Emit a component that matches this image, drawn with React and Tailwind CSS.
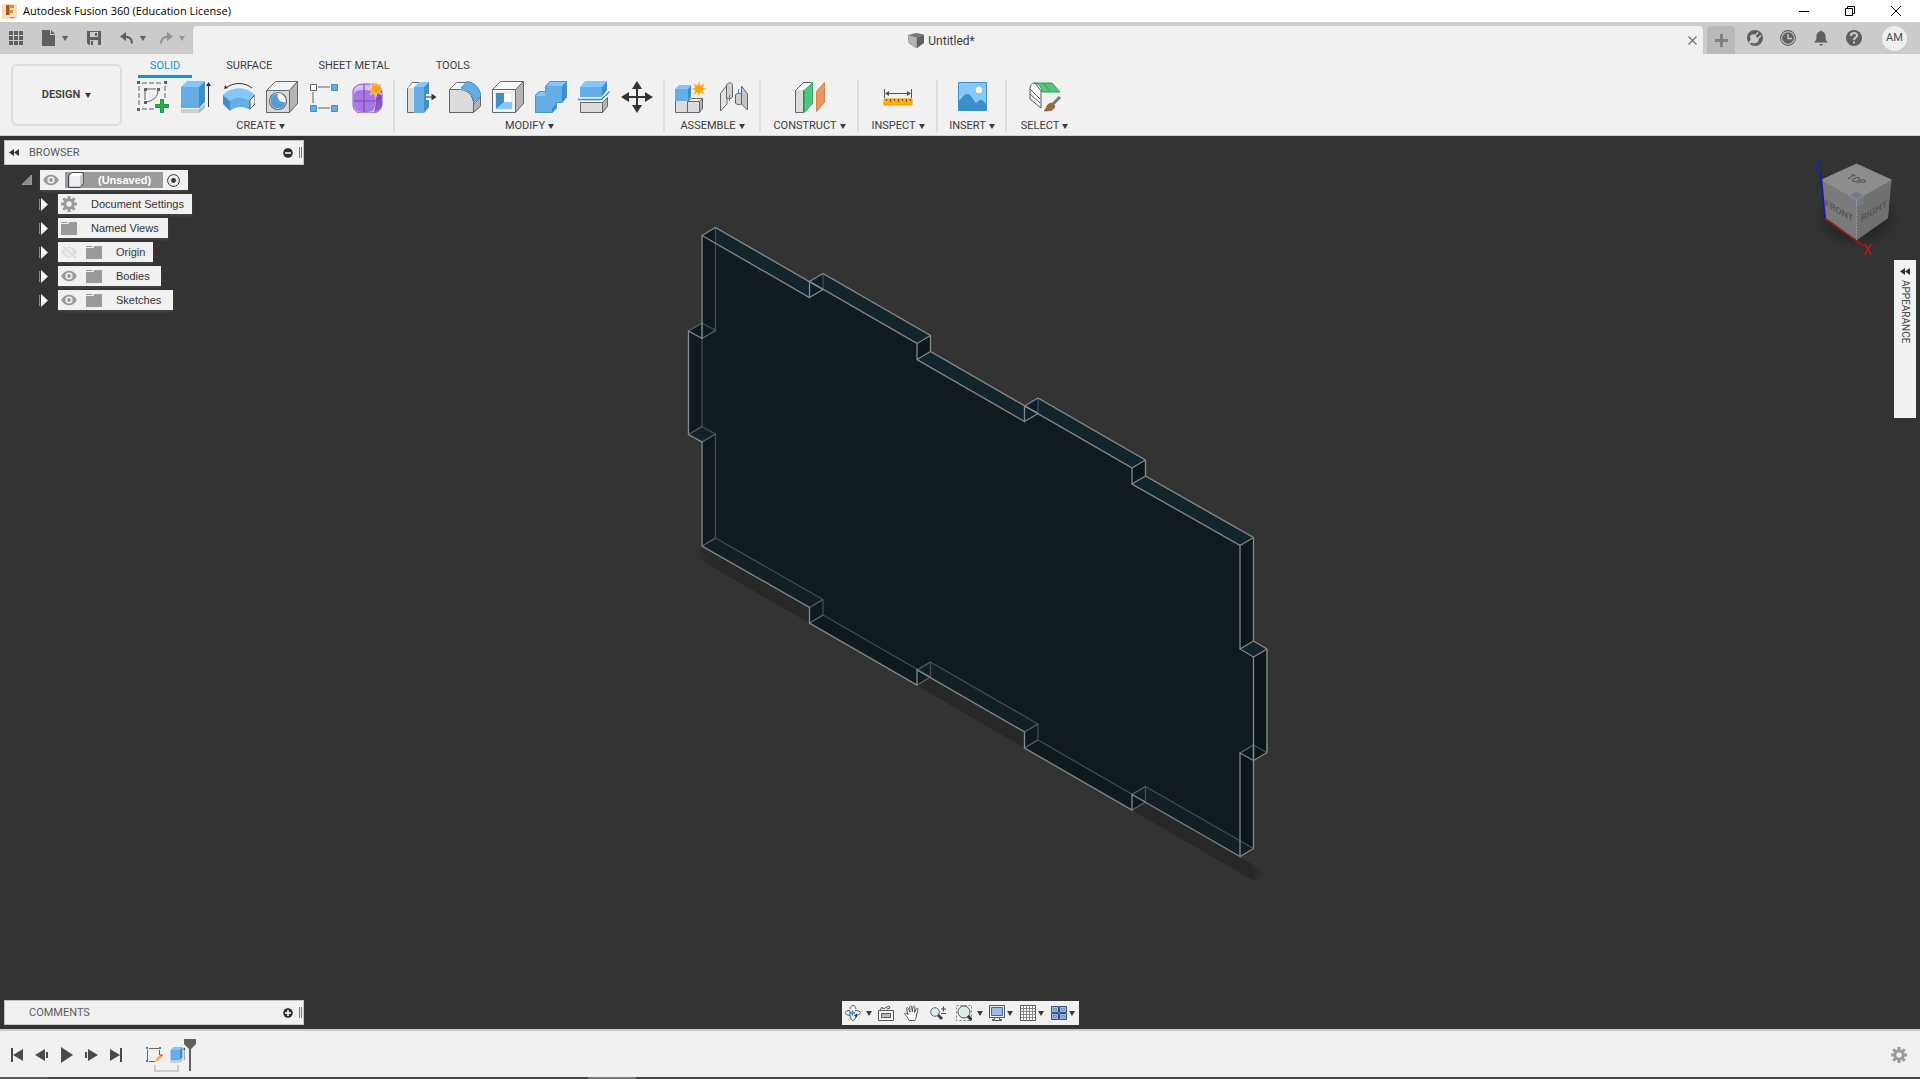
import React, { useState } from 'react';

const Icon = ({ size = 'w-8 h-8', box = '0 0 32 32', children }) => (
  <svg className={`${size} shrink-0 block`} viewBox={box} fill="none" aria-hidden="true">
    {children}
  </svg>
);

const Caret = ({ className = 'text-[#3c3c3c]' }) => (
  <svg className={`w-[6px] h-[5px] shrink-0 ${className}`} viewBox="0 0 6 5" aria-hidden="true">
    <path d="M0 0h6L3 5z" fill="currentColor" />
  </svg>
);

const STAR = 'M24 0l1.5 4.5L30 2l-2.300 4.500L32 8l-4.300 1.500L30 14l-4.500-2.500L24 16l-1.500-4.500L18 14l2.300-4.500L16 8l4.300-1.500L18 2l4.500 2.500z';

// Ribbon icons

const SketchIcon = () => (
  <Icon>
    <path d="M5 2h20M2 5v20M28 5v14M5 28h13" stroke="#606060" strokeDasharray="5 2" />
    <path d="M10 8h9M8 10v9M21 9c0 7-5 11-12 12" stroke="#606060" />
    <path d="M0 0h3v3H0zM27 0h3v3h-3zM0 27h3v3H0zM7 7h3v3H7zM20 7h3v3h-3zM7 20h3v3H7z" fill="#606060" />
    <path d="M23.500 18.500h3v5h5v3h-5v5h-3v-5h-5v-3h5z" fill="#22b14c" stroke="#159a3c" />
  </Icon>
);

const ExtrudeIcon = ({ size }) => (
  <Icon size={size}>
    <path d="M1 28h18l6-5v4l-6 5H1z" fill="#b9b9b9" />
    <path d="M1 28h18v4H1z" fill="#cfcfcf" />
    <path d="M1 6l6-6h18l-6 6z" fill="#84c7fb" />
    <path d="M1 6h18v21H1z" fill="#65ade5" />
    <path d="M19 6l6-6v21l-6 6z" fill="#3d8fcb" />
    <path d="M28.500 4v22" stroke="#333" />
    <path d="M28.500 1l2.500 4h-5z" fill="#333" />
  </Icon>
);

const RevolveIcon = () => (
  <Icon>
    <path d="M3 7C10 1 22 1 29 7" stroke="#333" />
    <path d="M1 8l1-4 3 3z" fill="#333" />
    <path d="M0 14C8 5 24 5 32 14l-5 6c-6-5-14-5-20 0z" fill="#84c7fb" />
    <path d="M0 14l7 6v10l-7-7z" fill="#3d8fcb" />
    <path d="M7 20c6-5 13-5 20 0v9c-6-4-14-4-20 1z" fill="#65ade5" />
    <path d="M27 19l5-5v9l-5 5z" fill="#f5f5f5" stroke="#555" />
  </Icon>
);

const HoleIcon = () => (
  <Icon>
    <path d="M.5 9.500l9-9h22l-8 9z" fill="#f4f4f4" stroke="#666" />
    <path d="M23.500 9.500l8-9v22l-8 9z" fill="#b4b4b4" stroke="#666" />
    <path d="M.5 9.500h23v22H.5z" fill="#dadada" stroke="#666" />
    <circle cx="12" cy="20" r="8.500" fill="#fff" stroke="#666" strokeWidth="1.200" />
    <path d="M12 12.500a7.500 7.500 0 1 0 7.500 8.500c-5 1-9-3-7.500-8.500z" fill="#4f9edb" />
  </Icon>
);

const PatternIcon = () => (
  <Icon>
    <path d="M9 6h12M4 11v11M9 27h12" stroke="#606060" />
    <path d="M1.500 3.500h6v6h-6z" fill="#fff" stroke="#606060" />
    <path d="M22.500 3.500h6v6h-6zM1.500 24.500h6v6h-6zM22.500 24.500h6v6h-6z" fill="#65ade5" stroke="#3d8fcb" />
  </Icon>
);

const FormIcon = () => (
  <Icon>
    <path d="M1 11c0-6 5-8 12-8h8c7 0 9 4 9 10v9c0 7-4 10-11 10h-9C4 32 1 29 1 23z" fill="#d9bdf8" />
    <path d="M2 14c0-4 4-5 9-5h4c6 0 8 3 8 8v6c0 6-3 8-9 8h-3c-6 0-9-3-9-8z" fill="#a878e0" />
    <path d="M23 11l7-4v15c0 4-3 8-8 9 2-4 2-15 1-20z" fill="#8655c4" />
    <path d="M12 3v28M2 20h21l7-4" stroke="#7442b4" />
    <path d="M1 11c0-6 5-8 12-8h8c7 0 9 4 9 10v9c0 7-4 10-11 10h-9C4 32 1 29 1 23z" stroke="#8655c4" />
    <path d={STAR} fill="#fba504" stroke="#f1f1f1" strokeWidth=".5" />
  </Icon>
);

const PressPullIcon = () => (
  <Icon>
    <path d="M1.500 7.500l5-6h10v30H1.500z" fill="#dcdcdc" stroke="#666" />
    <path d="M2 7l5-5h6L8 7z" fill="#fff" />
    <path d="M8 6l5-5h10l-5 5z" fill="#84c7fb" />
    <path d="M8 6h10v26H8z" fill="#65ade5" />
    <path d="M18 6l5-5v25l-5 6z" fill="#3d8fcb" />
    <path d="M20 13h9v6h-9z" fill="#f1f1f1" />
    <path d="M20 16h7" stroke="#333" />
    <path d="M25.500 12.500l5 3.500-5 3.500z" fill="#333" />
  </Icon>
);

const FilletIcon = () => (
  <Icon>
    <path d="M.5 8.500l7-7h12C27 3 31 9 31.500 16v9l-7 6.500H.5z" fill="#f4f4f4" stroke="#666" />
    <path d="M24 24l7.500-8v9l-7 6.500z" fill="#b4b4b4" stroke="#666" />
    <path d="M.5 8.500h11c8 1 12 6 13 13v10H.5z" fill="#dcdcdc" stroke="#666" />
    <path d="M12 7l6-6.500c8 1 13 7 14 14.500l-7 6C24 13 19 8 12 7z" fill="#65ade5" stroke="#3d8fcb" />
  </Icon>
);

const ShellIcon = () => (
  <Icon>
    <path d="M.5 8.500l8-8h23l-8 8z" fill="#f8f8f8" stroke="#666" />
    <path d="M23.500 8.500l8-8v22l-8 9z" fill="#b4b4b4" stroke="#666" />
    <path d="M.5 8.500h23v23H.5z" fill="#f4f4f4" stroke="#666" />
    <path d="M4 12h16v16H4z" fill="#fff" stroke="#dcdcdc" />
    <path d="M4 12h8v10l-8 6z" fill="#3d8fcb" />
    <path d="M4 28l8-7h8v7z" fill="#84c7fb" />
  </Icon>
);

const CombineIcon = () => (
  <Icon>
    <path d="M0 14l4-4h6V6l5-6h17v16l-5 6h-5v5l-5 5H0z" fill="#65ade5" />
    <path d="M10 5l5-5h17l-5 5zM0 15l4-5h6v5z" fill="#84c7fb" />
    <path d="M27 5l5-5v16l-5 6zM17 27l5-5v5l-5 5z" fill="#3d8fcb" />
    <path d="M.5 31.500v-17l4-4h6v-5l5-5h16v16l-5 5h-5v5l-5 5z" stroke="#4696d2" />
  </Icon>
);

const SplitIcon = () => (
  <Icon>
    <path d="M2 6l5-6h22l-5 6z" fill="#84c7fb" />
    <path d="M2 6h22v10H2z" fill="#65ade5" />
    <path d="M24 6l5-6v9l-5 7z" fill="#3d8fcb" />
    <path d="M2.500 21.500h22v10h-22z" fill="#dcdcdc" stroke="#666" />
    <path d="M24.500 21.500l5-5v9l-5 6z" fill="#b4b4b4" stroke="#666" />
    <path d="M0 18.500h23.500l8-8" stroke="#f1f1f1" strokeWidth="4" />
    <path d="M0 18.500h23.500l8-8" stroke="#2f8fd8" strokeWidth="1.300" />
  </Icon>
);

const MoveIcon = () => (
  <Icon>
    <path d="M16 5v22M5 16h22" stroke="#333" strokeWidth="2" />
    <path d="M16 0l5 8H11zM16 32l5-8H11zM0 16l8-5v10zM32 16l-8-5v10z" fill="#333" />
  </Icon>
);

const NewComponentIcon = () => (
  <Icon>
    <path d="M.5 19.500h12v12H.5z" fill="#dcdcdc" stroke="#666" />
    <path d="M12.500 20.500l4-3h11l-3 3z" fill="#f8f8f8" stroke="#666" />
    <path d="M12.500 20.500h12v11h-12z" fill="#dcdcdc" stroke="#666" />
    <path d="M24.500 20.500l3-3v10l-3 4z" fill="#b4b4b4" stroke="#666" />
    <path d="M0 8l4-4h12l-3 4z" fill="#84c7fb" />
    <path d="M0 8h13v12H0z" fill="#65ade5" />
    <path d="M13 8l3-4v12l-3 4z" fill="#3d8fcb" />
    <path d={STAR} fill="#fba504" stroke="#f1f1f1" strokeWidth=".5" />
  </Icon>
);

const JointIcon = () => (
  <Icon>
    <path d="M2.500 12.500L9 4v19l-6.500 7z" fill="#e2e2e2" stroke="#666" strokeLinejoin="round" />
    <path d="M8.500 5c0-4 6-4 6-1v12c-1 2-4 2-6 1z" fill="#cfcfcf" stroke="#666" />
    <path d="M11.500 14v6M20.500 8v6" stroke="#2f8fd8" />
    <path d="M23.500 5l6 8v16l-6-6z" fill="#c4c4c4" stroke="#666" strokeLinejoin="round" />
    <path d="M17.500 14c1-2 4-2 6-1v10c-2 1-5 1-6-1z" fill="#cfcfcf" stroke="#666" />
  </Icon>
);

const PlaneIcon = () => (
  <Icon>
    <path d="M1.500 9.500l8-8h7l-7 8v22h-8z" fill="#dcdcdc" stroke="#666" />
    <path d="M2 9l8-7h8l-8 7z" fill="#fff" />
    <path d="M1.500 9.500l8-8h8" stroke="#555" />
    <path d="M10.500 9.500l8-8v21l-8 9z" fill="#55c57c" stroke="#37ad62" />
    <path d="M22.500 10.500l8-9v20l-8 9z" fill="#e8975e" stroke="#d8824a" />
  </Icon>
);

const MeasureIcon = () => (
  <Icon>
    <path d="M2.500 8v9M29.500 8v9M5 12.500h22" stroke="#555" />
    <path d="M3 12.500l4-2.500v5zM29 12.500L25 10v5z" fill="#555" />
    <path d="M2 18h28v6H2z" fill="#fdb012" stroke="#f09a00" />
    <path d="M4.500 18v2M8.500 18v3M12.500 18v2M16.500 18v3M20.500 18v2M24.500 18v3M28.500 18v2" stroke="#7a5500" />
  </Icon>
);

const InsertIcon = () => (
  <Icon>
    <path d="M2.500 1.500h28v28h-28z" fill="#84c7fb" stroke="#3d8fcb" />
    <path d="M3 20c3-3 5-7 8-7 4 0 6 6 9 9 2-2 3-3 5-3s3 2 5 4v6H3z" fill="#3d8fcb" />
    <circle cx="23" cy="9" r="3.200" fill="#fdf8c4" />
  </Icon>
);

const SelectIcon = () => (
  <Icon>
    <path d="M1 8c0-5 3-6 5-6l6 8v17L1 18z" fill="#fff" stroke="#555" strokeLinejoin="round" />
    <path d="M1 8l10 10M1 13l10 9" stroke="#555" />
    <path d="M5 2h18l8 9H13C13 6 9 2 5 2z" fill="#55c57c" stroke="#2f9f57" />
    <path d="M14 2l8 9" stroke="#2f9f57" />
    <path d="M31 16l-7 7" stroke="#777" strokeWidth="3" />
    <path d="M15 30c3-2 2-8 8-8l3 3c-1 5-6 5-11 5z" fill="#9b6a35" stroke="#7a5024" strokeWidth=".5" />
  </Icon>
);

const GROUPS = [
  { name: 'CREATE', width: 'w-[268px]', icons: [SketchIcon, ExtrudeIcon, RevolveIcon, HoleIcon, PatternIcon, FormIcon] },
  { name: 'MODIFY', width: 'w-[270px]', icons: [PressPullIcon, FilletIcon, ShellIcon, CombineIcon, SplitIcon, MoveIcon] },
  { name: 'ASSEMBLE', width: 'w-24', icons: [NewComponentIcon, JointIcon] },
  { name: 'CONSTRUCT', width: 'w-[98px]', icons: [PlaneIcon] },
  { name: 'INSPECT', width: 'w-[79px]', icons: [MeasureIcon] },
  { name: 'INSERT', width: 'w-[69px]', icons: [InsertIcon] },
  { name: 'SELECT', width: 'w-[74px]', icons: [SelectIcon], last: true },
];

const TitleBar = () => (
  <header className="h-[22px] flex items-center bg-white text-black">
    <svg className="w-[15px] h-[15px] ml-[2px]" viewBox="0 0 15 15" aria-hidden="true">
      <path d="M0 0h15v15H0z" fill="#fbdcc0" />
      <path d="M5 1h7v3H8v2h3v3H8v2H5z" fill="#e08a3c" />
      <path d="M4 1h3v10H4z" fill="#a85a1c" />
      <path d="M8 13h5v1H8z" fill="#e08a3c" />
    </svg>
    <h1 className="ml-[6px] text-[11px] leading-[18px] font-['Open_Sans',sans-serif]">Autodesk Fusion 360 (Education License)</h1>
    <div className="ml-auto flex mr-px">
      <button className="w-[46px] h-[18px] grid place-items-center" aria-label="Minimize">
        <svg className="w-[10px] h-[10px]" viewBox="0 0 10 10"><path d="M0 5.500h10" stroke="#000" /></svg>
      </button>
      <button className="w-[46px] h-[18px] grid place-items-center" aria-label="Restore">
        <svg className="w-[10px] h-[10px]" viewBox="0 0 10 10" fill="none">
          <path d="M.5 2.500h7v7h-7zM2.500 2V.5h7v7H8" stroke="#000" />
        </svg>
      </button>
      <button className="w-[46px] h-[18px] grid place-items-center" aria-label="Close window">
        <svg className="w-[10px] h-[10px]" viewBox="0 0 10 10"><path d="M0 0l10 10M10 0L0 10" stroke="#000" /></svg>
      </button>
    </div>
  </header>
);

const TabBar = () => (
  <div className="h-8 flex items-end bg-[#cbcbcb] text-[#5f5f5f]">
    <div className="w-[193px] h-8 flex items-center pl-[9px] shrink-0">
      <button aria-label="Show data panel">
        <Icon size="w-[14px] h-[14px]" box="0 0 14 14">
          <path d="M0 0h4v4H0zM5 0h4v4H5zM10 0h4v4h-4zM0 5h4v4H0zM5 5h4v4H5zM10 5h4v4h-4zM0 10h4v4H0zM5 10h4v4H5zM10 10h4v4h-4z" fill="currentColor" />
        </Icon>
      </button>
      <button className="ml-[19px] flex items-center gap-[7px]" aria-label="File">
        <Icon size="w-[13px] h-4" box="0 0 13 16">
          <path d="M0 0h8v5h5v11H0zM9 0l4 4H9z" fill="currentColor" />
        </Icon>
        <Caret className="text-[#5f5f5f]" />
      </button>
      <button className="ml-[19px]" aria-label="Save">
        <Icon size="w-[14px] h-[14px]" box="0 0 14 14">
          <path d="M0 0h14v14H2l-2-2z" fill="currentColor" />
          <path d="M3 1h8v5H3zM3 9h8v5H3z" fill="#cbcbcb" />
          <path d="M8 2h2v3H8zM4 10h2v4H4z" fill="currentColor" />
        </Icon>
      </button>
      <button className="ml-[19px] flex items-center gap-[7px]" aria-label="Undo">
        <Icon size="w-[13px] h-3" box="0 0 13 12">
          <path d="M0 4.500L6 0v9z" fill="currentColor" />
          <path d="M4 4.500c5 0 8 2 8 7" stroke="currentColor" strokeWidth="2" />
        </Icon>
        <Caret className="text-[#5f5f5f]" />
      </button>
      <button className="ml-[14px] flex items-center gap-[6px]" aria-label="Redo">
        <Icon size="w-[13px] h-3" box="0 0 13 12">
          <path d="M13 4.500L7 0v9z" fill="#949494" />
          <path d="M9 4.500c-5 0-8 2-8 7" stroke="#949494" strokeWidth="2" />
        </Icon>
        <Caret className="text-[#949494]" />
      </button>
    </div>
    <div className="flex-1 h-7 bg-[#f1f1f1] rounded-t flex items-center">
      <div className="flex-1 flex items-center justify-center gap-1 pl-[2px] pt-px">
        <Icon size="w-4 h-[15px]" box="0 0 16 15">
          <path d="M0 2l8-2 8 1.500-7 3z" fill="#777" />
          <path d="M0 2l9 2.500V15L1 10z" fill="#b5b5b5" stroke="#777" strokeWidth=".6" />
          <path d="M9 4.500l7-3V10l-7 5z" fill="#606060" />
        </Icon>
        <span className="text-[12px] leading-4 text-[#3c3c3c]">Untitled*</span>
      </div>
      <button className="mr-[6px]" aria-label="Close tab">
        <Icon size="w-[9px] h-[9px]" box="0 0 9 9">
          <path d="M.5 .5l8 8M8.500 .5l-8 8" stroke="#777" strokeWidth="1.400" />
        </Icon>
      </button>
    </div>
    <button className="ml-1 w-7 h-7 bg-[#b9b9b9] rounded-t grid place-items-center" aria-label="New design">
      <Icon size="w-[13px] h-[13px]" box="0 0 13 13"><path d="M5 0h3v5h5v3H8v5H5V8H0V5h5z" fill="#808080" /></Icon>
    </button>
    <div className="h-8 flex items-center gap-[17px] pl-3 pr-[13px]">
      <button aria-label="Extensions">
        <Icon size="w-4 h-4" box="0 0 16 16">
          <circle cx="8" cy="8" r="8" fill="currentColor" />
          <path d="M3 5.500L7 4l5 5.500-1.500 3-3.500 1-2.500-1L3 14l-1.500-2 2-2z" fill="#cbcbcb" />
          <path d="M8 5.500l3-3M11 8.500l3-3" stroke="#cbcbcb" strokeWidth="1.600" />
        </Icon>
      </button>
      <button aria-label="Job status">
        <Icon size="w-4 h-4" box="0 0 16 16">
          <circle cx="8" cy="8" r="7.400" stroke="currentColor" strokeWidth="1.100" />
          <circle cx="8" cy="8" r="5.800" fill="currentColor" />
          <path d="M8 4v4.500h4" stroke="#cbcbcb" strokeWidth="1.300" />
        </Icon>
      </button>
      <button aria-label="Notifications">
        <Icon size="w-4 h-4" box="0 0 16 16">
          <path d="M8 0l1 1.500c3 .8 3.500 3 3.500 5 0 3 .5 4.500 2.500 6H1c2-1.500 2.500-3 2.500-6 0-2 .5-4.200 3.500-5zM6 14h4l-2 2z" fill="currentColor" />
        </Icon>
      </button>
      <button aria-label="Help">
        <Icon size="w-4 h-4" box="0 0 16 16">
          <circle cx="8" cy="8" r="8" fill="currentColor" />
          <path d="M5 6c0-4 6-4 6-.5C11 7.500 8 7.500 8 10" stroke="#cbcbcb" strokeWidth="2" />
          <path d="M7 11.500h2v2H7z" fill="#cbcbcb" />
        </Icon>
      </button>
      <button className="ml-[3px] w-[25px] h-[25px] rounded-full bg-[#efefef] text-[11px] text-[#4a4a4a]">AM</button>
    </div>
  </div>
);

const Ribbon = () => {
  const [active, setActive] = useState('SOLID');

  return (
    <div className="h-[82px] flex bg-[#f1f1f1] border-b border-[#d4d4d4] text-[#3c3c3c] text-[11px]">
      <button className="ml-[11px] mt-[10px] w-[111px] h-[62px] pt-px shrink-0 border-2 border-[#dedede] rounded-md flex items-center justify-center gap-[5px] font-semibold">
        DESIGN <Caret />
      </button>
      <div className="ml-[5px] flex flex-col">
        <nav className="h-6 flex gap-[22px] pl-[11px]">
          {['SOLID', 'SURFACE', 'SHEET METAL', 'TOOLS'].map(tab => (
            <button
              key={tab}
              onClick={() => setActive(tab)}
              className={
                tab === active
                  ? 'px-3 h-6 leading-[23px] border-b-[3px] border-[#0d96dc] text-[#0d96dc]'
                  : 'px-3 h-6 leading-[23px] border-b-[3px] border-transparent'
              }
            >
              {tab}
            </button>
          ))}
        </nav>
        <div className="flex pt-[2px]">
          {GROUPS.map(group => (
            <section
              key={group.name}
              className={`${group.width} h-[52px] pl-px flex flex-col items-center ${group.last ? '' : 'border-r-2 border-[#dedede]'}`}
            >
              <div className="flex gap-[11px] pt-px">
                {group.icons.map((Tool, i) => (
                  <button key={i} aria-label={`${group.name} tool ${i + 1}`}><Tool /></button>
                ))}
              </div>
              <button className="mt-[6px] flex items-center gap-[3px] leading-[14px]">
                {group.name} <Caret />
              </button>
            </section>
          ))}
        </div>
      </div>
    </div>
  );
};

const Eye = ({ hidden }) => (
  <Icon size="w-4 h-4" box="0 0 16 16">
    <path d="M0 8c4-7 12-7 16 0-4 7-12 7-16 0z" fill={hidden ? '#dedede' : '#9a9a9a'} />
    <circle cx="8" cy="8" r="3.600" fill="#f1f1f1" />
    <circle cx="8" cy="8" r="1.900" fill={hidden ? '#dedede' : '#9a9a9a'} />
    {hidden && <path d="M2 2l13 12" stroke="#f1f1f1" strokeWidth="3" />}
    {hidden && <path d="M2 2l13 12" stroke="#d0d0d0" strokeWidth="1.200" />}
  </Icon>
);

const Folder = () => (
  <Icon size="w-4 h-[14px]" box="0 0 16 14">
    <path d="M0 1h6l1 1H0zM0 3h7l2-2h7v13H0z" fill="#9a9a9a" />
  </Icon>
);

const Gear = ({ size = 'w-4 h-4' }) => (
  <Icon size={size} box="0 0 16 16">
    <circle cx="8" cy="8" r="4.200" stroke="#9a9a9a" strokeWidth="3" />
    <path d="M8 0v3M8 13v3M0 8h3M13 8h3M2.300 2.300l2.200 2.200M11.500 11.500l2.200 2.200M2.300 13.700l2.200-2.200M11.500 4.500l2.200-2.200" stroke="#9a9a9a" strokeWidth="3" />
  </Icon>
);

const NODES = [
  { label: 'Document Settings', icon: Gear, width: 'w-[134px]' },
  { label: 'Named Views', icon: Folder, width: 'w-[110px]' },
  { label: 'Origin', icon: Folder, eye: 'off', width: 'w-[95px]' },
  { label: 'Bodies', icon: Folder, eye: 'on', width: 'w-[103px]' },
  { label: 'Sketches', icon: Folder, eye: 'on', width: 'w-[115px]' },
];

const PanelHeader = ({ title, open }) => (
  <div className="w-[300px] h-[25px] flex items-center bg-[#f1f1f1] border border-[#c4c4c4]">
    <button className="w-6 pl-1 h-4 flex items-center" aria-label={`Collapse ${title}`}>
      {open && (
        <Icon size="w-[10px] h-[7px]" box="0 0 10 7"><path d="M5 0v7L0 3.500zM10 0v7L5 3.500z" fill="#333" /></Icon>
      )}
    </button>
    <h2 className="pt-[2px] text-[11px] text-[#5a5a5a]">{title}</h2>
    <button className="ml-auto" aria-label={open ? `Hide ${title}` : `Show ${title}`}>
      <Icon size="w-[10px] h-[10px]" box="0 0 10 10">
        <circle cx="5" cy="5" r="4.800" fill="#2e2e2e" />
        <path d={open ? 'M2 5h6' : 'M2 5h6M5 2v6'} stroke="#fff" strokeWidth="1.500" />
      </Icon>
    </button>
    <div className="ml-[6px] mr-px w-[3px] h-[11px] border-l border-r border-[#777]" />
  </div>
);

const Browser = () => (
  <aside className="text-[11px] text-[#333] font-['Liberation_Sans',Arial,sans-serif]">
    <div className="font-[Roboto,sans-serif]"><PanelHeader title="BROWSER" open /></div>
    <div className="mt-[5px] flex items-center pl-[18px] h-5">
      <Icon size="w-[10px] h-[10px]" box="0 0 11 11">
        <path d="M10.500 0v10.500H0z" fill="#8a8a8a" stroke="#ccc" strokeWidth=".6" />
      </Icon>
      <div className="ml-2 h-5 w-[148px] bg-[#f1f1f1] flex items-center pl-[3px] shadow-[0_2px_2px_#444]">
        <Eye />
        <div className="ml-[6px] w-[98px] h-4 bg-[#9a9a9a] flex items-center pl-[3px] text-white font-bold">
          <Icon size="w-4 h-4" box="0 0 16 16">
            <path d="M.7 4l3-3.300h11.500v11l-3 3.600H.7z" fill="#eceef4" stroke="#333" strokeLinejoin="round" />
            <path d="M12 4l3-3v10.500l-3 3.500z" fill="#c4c7cf" />
            <path d="M1.200 4l3-2.800h10.300L12 4z" fill="#fff" />
          </Icon>
          <span className="ml-[14px] whitespace-nowrap">(Unsaved)</span>
        </div>
        <Icon size="w-[13px] h-[13px] ml-1" box="0 0 13 13">
          <circle cx="6.500" cy="6.500" r="5.900" stroke="#333" />
          <circle cx="6.500" cy="6.500" r="2.400" fill="#333" />
        </Icon>
      </div>
    </div>
    <ul className="mt-1 flex flex-col gap-1">
      {NODES.map(node => (
        <li key={node.label} className="h-5 flex items-center pl-[35px]">
          <button aria-label={`Expand ${node.label}`}>
            <Icon size="w-[10px] h-[13px]" box="0 0 10 13">
              <path d="M.5 1v11" stroke="#888" />
              <path d="M2 0l7 6.500L2 13z" fill="#f1f1f1" />
            </Icon>
          </button>
          <div className={`${node.width} ml-[9px] h-5 bg-[#f1f1f1] flex items-center pl-[3px] shadow-[0_2px_2px_#444]`}>
            {node.eye && <div className="mr-[9px]"><Eye hidden={node.eye === 'off'} /></div>}
            <node.icon />
            <span className="ml-[14px] whitespace-nowrap">{node.label}</span>
          </div>
        </li>
      ))}
    </ul>
  </aside>
);

// Model geometry, in drawing units
const FRONT = [
  [702, 235.5], [809.5, 297.500], [809.5, 281.500], [917, 343.500], [917, 359.500], [1024.5, 421.5],
  [1024.5, 406], [1132, 468], [1132, 484], [1240, 545.5], [1240, 649], [1253.5, 657], [1253.5, 760.5],
  [1240, 753], [1240, 856.5], [1132, 794.5], [1132, 810], [1024.5, 748], [1024.5, 732], [917, 670],
  [917, 685], [809.5, 623], [809.5, 607.5], [702, 546], [702, 442], [688.5, 434.5], [688.5, 331], [702, 338.5],
];
const DX = 13.5;
const DY = -8;
const toPoints = pts => pts.map(p => p.join(',')).join(' ');
const BACK = FRONT.map(([x, y]) => [x + DX, y + DY]);

// Side walls between the front and back outline; one colour for each direction
const wallFill = ([x1, y1], [x2, y2]) => {
  if (x1 === x2) return '#0c161b';
  return y2 > y1 ? '#12242c' : '#121f25';
};

// Back edges that are not covered by the plate
const LIT = [0, 2, 3, 4, 6, 7, 8, 9, 10, 11];

const Model = () => (
  <svg
    className="absolute inset-0 w-full h-full"
    viewBox="0 136 1920 893"
    preserveAspectRatio="xMidYMid meet"
    role="img"
    aria-label="Plate with finger joints"
  >
    <defs>
      <linearGradient id="face" x1="0" y1="0" x2="1" y2="0">
        <stop offset="0" stopColor="#121b21" />
        <stop offset=".3" stopColor="#101b1f" />
        <stop offset=".6" stopColor="#111a1f" />
        <stop offset="1" stopColor="#111a1f" />
      </linearGradient>
      <linearGradient id="shade" x1="0" y1="0" x2="1" y2="0">
        <stop offset="0" stopColor="#282828" stopOpacity="0" />
        <stop offset=".04" stopColor="#282828" />
        <stop offset=".97" stopColor="#282828" />
        <stop offset="1" stopColor="#282828" stopOpacity="0" />
      </linearGradient>
      <radialGradient id="glow">
        <stop offset=".5" stopColor="#262626" />
        <stop offset="1" stopColor="#262626" stopOpacity="0" />
      </radialGradient>
    </defs>

    <path d="M690 554l13-8 564 327-13 8z" fill="url(#shade)" />
    <polygon points={toPoints(BACK)} fill="#12242c" />
    {FRONT.map((p, i) => {
      const q = FRONT[(i + 1) % FRONT.length];
      const wall = [p, q, [q[0] + DX, q[1] + DY], [p[0] + DX, p[1] + DY]];
      return <polygon key={i} points={toPoints(wall)} fill={wallFill(p, q)} />;
    })}
    <polygon points={toPoints(FRONT)} fill="url(#face)" />

    {/* strips of the lower and left walls seen through the plate */}
    <g fill="#122026">
      <path d="M702 546l13.500-8 107.500 62-13.500 7.500z" />
      <path d="M809.500 623l13.500-8 107.500 62-13.500 8z" fill="#0f1a1f" />
      <path d="M917 670l13.500-8L1038 724l-13.500 8z" />
      <path d="M1024.500 748l13.500-8 107.500 62-13.500 8z" fill="#0f1a1f" />
      <path d="M1132 794.500l13.500-8L1253.500 848.500l-13.500 8z" />
      <path d="M702 235.500l13.500-8v103l-13.500 8zM702 442l13.500-8v104l-13.500 8zM688.500 331l13.500-8v103.500l-13.500 8z" fill="#0f191e" />
      <path d="M688.500 331l13.500-8 13.500 7.500-13.500 8z" fill="#0a1b22" />
      <path d="M688.500 434.500l13.500-8 13.500 7.500-13.500 8z" fill="#132229" />
      <path d="M809.500 281.500l13.500-8v16l-13.500 8zM1024.500 406l13.500-8v15.500l-13.500 8z" fill="#0a1f29" />
      <path d="M1240 753l13.500-8 13.500 7.500-13.500 8z" fill="#0a181b" />
    </g>

    <g stroke="#464f52" strokeWidth="1.200" fill="none">
      <polygon points={toPoints(BACK)} />
    </g>
    <g stroke="#868989" strokeWidth="1.300" fill="none">
      {FRONT.map(([x, y], i) => (
        <path key={i} d={`M${x} ${y}l${DX} ${DY}`} stroke={i > 12 && i !== 14 ? '#5c6465' : '#868989'} />
      ))}
      {LIT.map(i => (
        <path key={i} d={`M${BACK[i].join(' ')}L${BACK[i + 1].join(' ')}`} />
      ))}
      <path d="M1253.500 745v103.500" />
      <polygon points={toPoints(FRONT)} />
    </g>

    {/* view cube */}
    <ellipse cx="1857" cy="219" rx="44" ry="30" fill="url(#glow)" />
    <path d="M1856.500 163.500l35 16-35 20-35-20z" fill="#8d8d8d" />
    <path d="M1821.500 179.500l35 20v41l-31.500-22.500z" fill="#7b7b7b" />
    <path d="M1891.500 179.500l-35 20v41l31.500-22.500z" fill="#707070" />
    <path d="M1849.500 195.500l7-4 7 4v8l-7 4-7-4z" fill="#757a83" />
    <path d="M1821.500 179.500l35 20 35-20M1856.500 199.500v41" stroke="#a0a0a0" strokeDasharray="2 1" fill="none" />
    <path d="M1820.500 172l4.500 46" stroke="#1a1aa8" strokeWidth="2" />
    <path d="M1825 218.500l38 27" stroke="#8e1c1c" strokeWidth="2" />
    <g fontFamily="Roboto, sans-serif" fill="#4f5359" textAnchor="middle">
      <text y="4" fontSize="9" fontWeight="500" transform="translate(1839 210) skewY(30)">FRONT</text>
      <text y="4" fontSize="9" fontWeight="500" transform="translate(1874 210) skewY(-31)">RIGHT</text>
      <text y="4" fontSize="9" fontWeight="500" transform="translate(1857 179) rotate(26) skewX(-30)">TOP</text>
      <text x="1818.500" y="170" fontSize="14" fill="#2020a8">Z</text>
      <text x="1867.500" y="255" fontSize="14" fontWeight="500" fill="#9a2020">X</text>
    </g>
  </svg>
);

const NavBar = () => (
  <div className="h-6 flex items-center bg-[#f1f1f1] pl-[3px] pr-1">
    <button className="flex items-center gap-[5px]" aria-label="Orbit">
      <Icon size="w-4 h-4" box="0 0 16 16">
        <path d="M5 10.500C-2 9.500-1 5.500 5 5.500M10 5.500c7 0 7 4 1 5" stroke="#555" />
        <path d="M5 4c1-5 5-5 6 0M11 11c-1 6-5 6-6 0V6" stroke="#555" />
        <path d="M5 8h5M7.500 5.500v5" stroke="#2490dc" strokeWidth="1.400" />
        <path d="M9 10.500l3-2v4z" fill="#333" />
      </Icon>
      <Caret />
    </button>
    <button className="ml-[6px]" aria-label="Look at">
      <Icon size="w-4 h-4" box="0 0 16 16">
        <path d="M.5 5.500h15v10H.5z" fill="#f8f8f8" stroke="#555" />
        <path d="M3.500 8.500h9v4h-9z" fill="#bbb" stroke="#555" />
        <path d="M2 5l2-3 1 2 6-3 1 2-3 1" stroke="#555" />
      </Icon>
    </button>
    <button className="ml-[10px]" aria-label="Pan">
      <Icon size="w-4 h-4" box="0 0 16 16">
        <path d="M5 15.500C4 12 1 10 .5 8.500c1-1 2.500 0 3.500 1.500L2.500 3c1-1 2 0 2 1L6 7l-.3-5.500c1-1.200 1.800-.5 2 .5L8.300 7l.7-5.500c1-1 2-.3 1.800 1L10.500 7.500l2-4c1-.6 1.700.2 1.400 1L12.500 10c0 3-1 4-1.500 5.500z" fill="#fff" stroke="#555" strokeLinejoin="round" />
      </Icon>
    </button>
    <button className="ml-[10px]" aria-label="Zoom">
      <Icon size="w-4 h-4" box="0 0 16 16">
        <circle cx="5" cy="7" r="4.300" fill="#d8f0f4" stroke="#666" />
        <path d="M8 10l4 4" stroke="#444" strokeWidth="3" />
        <path d="M11 4h5M13.500 1.500v5M11 8.500h5" stroke="#444" />
      </Icon>
    </button>
    <button className="ml-[10px] flex items-center gap-[5px]" aria-label="Fit">
      <Icon size="w-4 h-4" box="0 0 16 16">
        <path d="M.5 .5h15v15H.5z" stroke="#777" strokeDasharray="2 2" />
        <circle cx="8" cy="7" r="6" fill="#d8f0ec" stroke="#555" />
        <path d="M12 11l3.500 4" stroke="#333" strokeWidth="3" />
      </Icon>
      <Caret />
    </button>
    <button className="ml-[6px] flex items-center gap-[2px]" aria-label="Display settings">
      <Icon size="w-4 h-4" box="0 0 16 16">
        <path d="M.5 .5h15v12H.5z" fill="#eee" stroke="#555" />
        <path d="M2.500 2.500h11v8h-11z" fill="#9dbce4" stroke="#4a6794" />
        <path d="M5.500 12.500v2h-2v1h9v-1h-2v-2z" fill="#eee" stroke="#555" />
      </Icon>
      <Caret />
    </button>
    <button className="ml-[7px] flex items-center gap-[2px]" aria-label="Grid and snaps">
      <Icon size="w-4 h-4" box="0 0 16 16">
        <path d="M.5 .5h15v15H.5z" fill="#fff" stroke="#555" />
        <path d="M.5 3.500h15M.5 6.500h15M.5 9.500h15M.5 12.500h15M3.500 .5v15M6.500 .5v15M9.500 .5v15M12.500 .5v15" stroke="#888" />
      </Icon>
      <Caret />
    </button>
    <button className="ml-[7px] flex items-center gap-[2px]" aria-label="Viewports">
      <Icon size="w-4 h-4" box="0 0 16 16">
        <path d="M.5 1.500h7v6h-7zM8.500 1.500h7v6h-7zM.5 8.500h7v6h-7zM8.500 8.500h7v6h-7z" fill="#9dbce4" stroke="#34507e" />
        <path d="M2.500 3.500h3v2h-3zM10.500 3.500h3v2h-3zM2.500 10.500h3v2h-3zM10.500 10.500h3v2h-3z" stroke="#6f90c0" />
      </Icon>
      <Caret />
    </button>
  </div>
);

const Timeline = () => (
  <footer className="h-12 flex items-center bg-[#f1f1f1] border-t-2 border-[#cccccc] pt-[2px] pl-[11px] pr-[13px]">
    <div className="flex items-center gap-3 text-[#4a4a4c]">
      <button aria-label="Go to start">
        <Icon size="w-3 h-[14px]" box="0 0 12 14"><path d="M0 0h2v14H0zM12 1v12L2 7z" fill="currentColor" /></Icon>
      </button>
      <button aria-label="Step back">
        <Icon size="w-[13px] h-[14px]" box="0 0 13 14"><path d="M10 1v12L0 7zM11 4h2v6h-2z" fill="currentColor" /></Icon>
      </button>
      <button aria-label="Play">
        <Icon size="w-[13px] h-4" box="0 0 13 16"><path d="M1 0l12 8-12 8z" fill="currentColor" /></Icon>
      </button>
      <button aria-label="Step forward">
        <Icon size="w-[13px] h-[14px]" box="0 0 13 14"><path d="M3 1v12l10-6zM0 4h2v6H0z" fill="currentColor" /></Icon>
      </button>
      <button aria-label="Go to end">
        <Icon size="w-3 h-[14px]" box="0 0 12 14"><path d="M10 0h2v14h-2zM0 1v12l10-6z" fill="currentColor" /></Icon>
      </button>
    </div>
    <div className="relative ml-6 h-8 flex items-center gap-[7px]">
      <button aria-label="Sketch1">
        <Icon size="w-[17px] h-4" box="0 0 17 16">
          <path d="M3 1.500h10M1.500 3v10M13.500 3v5M3 14.500h6" stroke="#666" />
          <path d="M0 0h2v2H0zM13 0h2v2h-2zM0 13h2v2H0z" fill="#1e8fe0" />
          <path d="M9 15l1-3 4-4 2 2-4 4z" fill="#fbb040" />
          <path d="M14 8l1-1 2 1-1 2z" fill="#e0405a" />
        </Icon>
      </button>
      <button aria-label="Extrude1"><ExtrudeIcon size="w-4 h-4" /></button>
      <div className="absolute left-2 top-[26px] w-[25px] h-[7px] border-2 border-t-0 border-[#cbcbcb]" />
      <svg className="absolute left-[38px] top-0 w-3 h-8" viewBox="0 0 12 32" aria-hidden="true">
        <path d="M0 0h12v5l-5 5v22H5V10L0 5z" fill="#606060" />
      </svg>
    </div>
    <button className="ml-auto" aria-label="Timeline settings"><Gear /></button>
  </footer>
);

const App = () => {
  return (
    <div className="min-h-screen flex flex-col bg-[#333333] font-[Roboto,sans-serif] overflow-hidden">
      <TitleBar />
      <TabBar />
      <Ribbon />

      {/* Canvas */}
      <main className="relative flex-1 flex flex-col justify-between bg-[#333333]">
        <Model />
        <div className="relative flex justify-between items-start pl-1 pr-1 pt-1">
          <Browser />
          <button className="mt-[120px] w-[22px] h-[158px] bg-[#f1f1f1] flex flex-col items-center pt-2 text-[#4a4a4a] text-[10px]">
            <Icon size="w-[10px] h-[7px]" box="0 0 10 7"><path d="M5 0v7L0 3.500zM10 0v7L5 3.500z" fill="#333" /></Icon>
            <span className="mt-[5px] [writing-mode:vertical-rl] leading-[14px]">APPEARANCE</span>
          </button>
        </div>
        <div className="relative grid grid-cols-[1fr_auto_1fr] items-end px-1 pb-1">
          <PanelHeader title="COMMENTS" />
          <NavBar />
        </div>
      </main>

      <Timeline />
      <div className="h-[2px] flex bg-[#444446]">
        <div className="w-12 bg-[#5c5c5c]" />
        <div className="ml-[540px] w-12 bg-[#777777]" />
      </div>
    </div>
  );
};

export default App;
